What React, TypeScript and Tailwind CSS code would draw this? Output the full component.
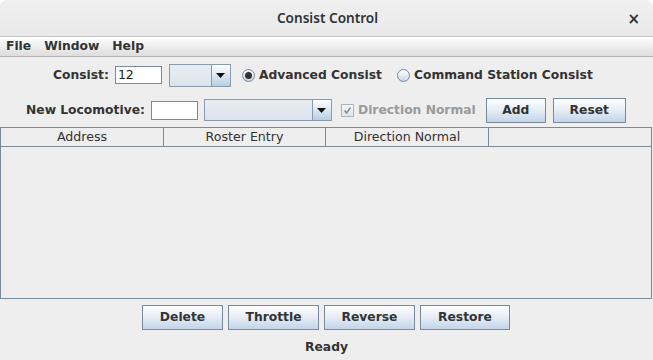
import React from "react";

const F = "font-['DejaVu_Sans',sans-serif]";

function Combo({ w, h }: { w: number; h: number }) {
  return (
    <div
      className="flex border border-[#8a9bad] bg-[#dfe6ee]"
      style={{ width: w, height: h }}
    >
      <div className="flex-1 bg-gradient-to-b from-[#e8edf2] to-[#dbe3eb]" />
      <div className="w-[19px] border-l border-[#8a9bad] bg-gradient-to-b from-[#ffffff] to-[#b8cfe5] flex items-center justify-center">
        <svg width="9" height="5" viewBox="0 0 9 5">
          <path d="M0 0 L9 0 L4.5 5 Z" fill="#111" />
        </svg>
      </div>
    </div>
  );
}

function Btn({ w, label }: { w: number; label: string }) {
  return (
    <div
      className={`h-[25px] border border-[#7a8a99] bg-gradient-to-b from-[#ffffff] via-[#e4ecf5] to-[#c3d5e8] flex items-center justify-center text-[12.3px] font-bold text-[#333333] ${F}`}
      style={{ width: w }}
    >
      {label}
    </div>
  );
}

function Radio({ on }: { on: boolean }) {
  return (
    <div className="w-[13px] h-[13px] rounded-full border border-[#7a8a99] bg-gradient-to-b from-[#ffffff] to-[#c8d8e8] flex items-center justify-center">
      {on && <div className="w-[7px] h-[7px] rounded-full bg-[#333333]" />}
    </div>
  );
}

export default function App() {
  return (
    <div className={`w-[653px] h-[360px] bg-white ${F}`}>
      <div className="w-full h-full bg-[#eeeeee] rounded-t-[7px] flex flex-col overflow-hidden">
        {/* title bar */}
        <div className="h-[37px] shrink-0 bg-gradient-to-b from-[#f0f0f0] to-[#e9e9e9] border-b border-[#c4c4c4] flex items-center relative">
          <div className="flex-1 text-center text-[13.6px] font-semibold text-[#2e3436] font-['Noto_Sans',sans-serif] pl-[2px]">
            Consist Control
          </div>
          <div className="absolute right-[13px] top-[8px] text-[15px] font-bold text-[#2e3436]">
            ×
          </div>
        </div>
        {/* menu */}
        <div className="h-[20px] shrink-0 bg-gradient-to-b from-[#ffffff] to-[#dddddd] border-b border-[#b5b5b5] flex items-center pl-[6px] gap-[13px] text-[12.3px] font-bold text-[#333333]">
          <span>File</span>
          <span>Window</span>
          <span>Help</span>
        </div>
        {/* row 1 */}
        <div className="mt-[7px] h-[22px] flex items-center pl-[53px] text-[12.3px] font-bold text-[#333333]">
          <span>Consist:</span>
          <div className="ml-[6px] w-[47px] h-[18px] border border-[#7a8a99] bg-white flex items-center pl-[2px] font-normal text-[12.5px] text-[#222]">
            12
          </div>
          <div className="ml-[7px]">
            <Combo w={62} h={23} />
          </div>
          <div className="ml-[11px]">
            <Radio on={true} />
          </div>
          <span className="ml-[4px]">Advanced Consist</span>
          <div className="ml-[15px]">
            <Radio on={false} />
          </div>
          <span className="ml-[4px]">Command Station Consist</span>
        </div>
        {/* row 2 */}
        <div className="mt-[11px] h-[26px] flex items-center pl-[26px] text-[12.3px] font-bold text-[#333333]">
          <span>New Locomotive:</span>
          <div className="ml-[6px] w-[47px] h-[19px] border border-[#7a8a99] bg-white" />
          <div className="ml-[6px]">
            <Combo w={128} h={22} />
          </div>
          <div className="ml-[9px] w-[13px] h-[13px] border border-[#a8b4c0] bg-gradient-to-b from-[#f6f8fa] to-[#dde5ed] flex items-center justify-center">
            <svg width="9" height="9" viewBox="0 0 9 9">
              <path d="M1.5 4.5 L3.5 7 L7.5 1.5" stroke="#8a8a8a" strokeWidth="1.4" fill="none" />
            </svg>
          </div>
          <span className="ml-[4px] text-[#9a9a9a]">Direction Normal</span>
          <div className="ml-[10px]">
            <Btn w={60} label="Add" />
          </div>
          <div className="ml-[7px]">
            <Btn w={73} label="Reset" />
          </div>
        </div>
        {/* table */}
        <div className="mt-[4px] ml-0 w-[652px] h-[172px] border-l border-b border-r border-[#7a8a99] flex flex-col">
          <div className="h-[20px] border-t border-b border-[#7a8a99] flex text-[12.6px] text-[#333333]">
            <div className="w-[163px] border-r border-[#7a8a99] flex items-center justify-center">Address</div>
            <div className="w-[162px] border-r border-[#7a8a99] flex items-center justify-center">Roster Entry</div>
            <div className="w-[163px] border-r border-[#7a8a99] flex items-center justify-center">Direction Normal</div>
            <div className="flex-1" />
          </div>
          <div className="flex-1 bg-[#eeeeee]" />
        </div>
        {/* buttons */}
        <div className="mt-[6px] flex pl-[142px] gap-[5px]">
          <Btn w={81} label="Delete" />
          <Btn w={91} label="Throttle" />
          <Btn w={91} label="Reverse" />
          <Btn w={90} label="Restore" />
        </div>
        <div className="mt-[8px] text-center text-[12.3px] font-bold text-[#333333]">Ready</div>
      </div>
    </div>
  );
}
